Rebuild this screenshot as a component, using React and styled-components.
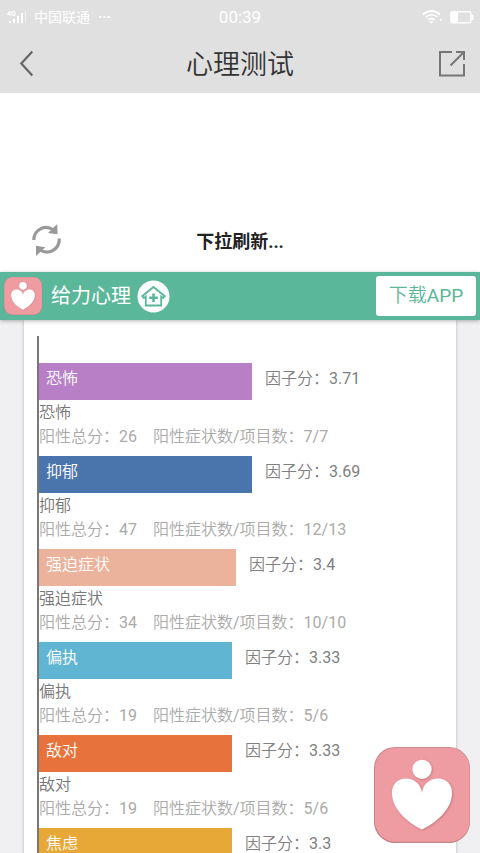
import styled, { createGlobalStyle } from "styled-components";

const GlobalStyle = createGlobalStyle`
  html {
    scrollbar-width: none;
  }
  body {
    margin: 0;
    background-color: #f0f0f2;
    font-family: Roboto, "Noto Sans CJK SC", sans-serif;
    color: #888888;
  }
  button {
    font-family: inherit;
    border: none;
    padding: 0;
    background: none;
    cursor: pointer;
  }
  svg {
    display: block;
  }
`

const lightFont = `Roboto, "Noto Sans CJK SC DemiLight", "Noto Sans CJK SC", sans-serif`

const TopArea = styled.header`
  background-color: #e0e0e0;
`

const StatusBar = styled.div`
  display: grid;
  grid-template-columns: 1fr auto 1fr;
  align-items: center;
  height: 34px;
  padding: 0 6px;
  color: #ffffff;
`

const StatusGroup = styled.div`
  display: flex;
  align-items: center;
  justify-content: ${props => props.$end ? "flex-end" : "flex-start"};
  gap: 8px;
  font-size: 14px;
  line-height: 20px;
`

const Dots = styled.span`
  font-weight: 700;
`

const Clock = styled.time`
  font-size: 17px;
`

const NavBar = styled.nav`
  display: grid;
  grid-template-columns: 1fr auto 1fr;
  align-items: center;
  height: 59px;
  padding: 0 14px;
`

const NavButton = styled.button`
  justify-self: ${props => props.$end ? "end" : "start"};
`

const PageTitle = styled.h1`
  margin: 0;
  padding-top: 3px;
  font-family: ${lightFont};
  font-size: 27px;
  font-weight: 400;
  line-height: 56px;
  color: #333333;
`

const Refresh = styled.div`
  display: grid;
  grid-template-columns: 1fr auto 1fr;
  align-items: center;
  box-sizing: border-box;
  height: 179px;
  padding: 115px 30px 0;
  background-color: #ffffff;
`

const RefreshText = styled.p`
  margin: 0;
  font-size: 18px;
  font-weight: 700;
  color: #222222;
`

const Banner = styled.section`
  position: relative;
  display: flex;
  align-items: center;
  height: 48px;
  padding: 0 4px;
  background-color: #5bb799;
  box-shadow: 0 1px 4px rgba(0, 0, 0, 0.3);
`

const Brand = styled.h2`
  margin: 0 6px 0 9px;
  font-size: 20px;
  font-weight: 400;
  line-height: 28px;
  color: #ffffff;
`

const Download = styled.button`
  margin-left: auto;
  width: 100px;
  height: 40px;
  border-radius: 3px;
  background-color: #ffffff;
  font-family: ${lightFont};
  font-size: 19px;
  line-height: 38px;
  color: #5bb799;
`

const Card = styled.main`
  margin: 0 24px;
  padding: 16px 15px 0 13px;
  background-color: #ffffff;
  box-shadow: 0 0 3px rgba(0, 0, 0, 0.25);
`

const Chart = styled.ul`
  margin: 0;
  padding: 27px 0 0;
  border-left: 2px solid #777777;
  list-style: none;
  font-family: ${lightFont};
  font-size: 16px;
`

const BarRow = styled.div`
  display: flex;
  gap: 13px;
  line-height: 32px;
`

const Bar = styled.div`
  box-sizing: border-box;
  height: 37px;
  padding-left: 7px;
  color: #ffffff;
  background-color: ${props => props.$color};
`

const Score = styled.span`
  color: #808080;
  white-space: nowrap;
`

const Name = styled.p`
  margin: 0;
  line-height: 26px;
  color: #777777;
`

const Detail = styled.p`
  display: flex;
  gap: 16px;
  margin: 0 0 8px;
  line-height: 22px;
  white-space: nowrap;
  color: #aaaaaa;
`

const FloatButton = styled.button`
  position: fixed;
  right: 10px;
  bottom: 10px;
`

const factors = [
  { name: "恐怖", score: "3.71", width: 53, color: "#b87fc6", total: 26, count: "7/7" },
  { name: "抑郁", score: "3.69", width: 53, color: "#4a75ac", total: 47, count: "12/13" },
  { name: "强迫症状", score: "3.4", width: 49, color: "#ebb39b", total: 34, count: "10/10" },
  { name: "偏执", score: "3.33", width: 48, color: "#60b5d2", total: 19, count: "5/6" },
  { name: "敌对", score: "3.33", width: 48, color: "#e8723c", total: 19, count: "5/6" },
  { name: "焦虑", score: "3.3", width: 48, color: "#e8a838" },
]

function HeartLogo({ size }) {
  return (
    <svg width={size} height={size} viewBox="0 0 96 96" aria-hidden="true">
      <defs>
        <filter id={`shade${size}`} x="-20%" y="-20%" width="140%" height="140%">
          <feDropShadow dx="0.8" dy="0.8" stdDeviation="1" floodColor="#8c4a50" floodOpacity="0.5" />
        </filter>
      </defs>
      <rect width="96" height="96" rx="21" fill="#c58489" />
      <rect x="1" y="0.7" width="94.6" height="94" rx="20.5" fill="#ee9ca2" />
      <g fill="#ffffff" filter={`url(#shade${size})`}>
        <circle cx="48" cy="22.3" r="9.6" />
        <path d="M48 46C47 37 40 31.5 32 31.5C23 31.5 18 38 18 46C18 62 33 75 48 82.5C63 75 78 62 78 46C78 38 73 31.5 64 31.5C56 31.5 49 37 48 46Z" />
      </g>
    </svg>
  )
}

function SignalIcon() {
  return (
    <svg width="20" height="16" viewBox="0 0 20 16" fill="#ffffff" aria-hidden="true">
      <text x="1" y="7" fontSize="7" fontWeight="700">4G</text>
      <path d="M3 12h2v2H3zM7 10h2v4H7zM11 7h2v7h-2zM15 4h2v10h-2z" />
      <path d="M19 2h1v12h-1z" opacity="0.5" />
    </svg>
  )
}

function WifiIcon() {
  return (
    <svg width="20" height="14" viewBox="0 0 20 14" fill="none" stroke="#ffffff" strokeWidth="1.8" aria-hidden="true">
      <path d="M1 4.5C6-.2 13-.2 18 4.5M3.7 7.2C7.2 4 11.8 4 15.3 7.2M6.3 9.8C8.3 8.2 10.7 8.2 12.7 9.8" />
      <path d="M7.3 11.2h4.4L9.5 13.8z" fill="#ffffff" stroke="none" />
      <circle cx="18.8" cy="9.8" r="1" fill="#ffffff" stroke="none" />
    </svg>
  )
}

function BatteryIcon() {
  return (
    <svg width="24" height="13" viewBox="0 0 24 13" fill="#ffffff" aria-hidden="true">
      <rect x="0.8" y="0.8" width="20" height="11" rx="1.5" fill="none" stroke="#ffffff" strokeWidth="1.4" />
      <path d="M1 1h7v11H1zM21.5 4H23.5v5h-2z" />
    </svg>
  )
}

function RefreshIcon() {
  return (
    <svg width="34" height="34" viewBox="0 0 34 34" aria-hidden="true">
      <g fill="none" stroke="#999999" strokeWidth="3.2">
        <path d="M3.8 17C4 6 16 0.8 24 7.5" />
        <path d="M29.3 15.5C29.5 27 18 32.5 9.3 26.5" />
      </g>
      <path d="M27.2 1L27.6 11.2L18 10Z" fill="#999999" />
      <path d="M6 33L6 22.8L15.4 24.2Z" fill="#999999" />
    </svg>
  )
}

function HomeIcon() {
  return (
    <svg width="33" height="33" viewBox="0 0 33 33" aria-hidden="true">
      <circle cx="16.5" cy="16.5" r="16" fill="#ffffff" />
      <g fill="none" stroke="#5bb799" strokeWidth="1.8">
        <path d="M16.5 7L27.8 16.2L26.2 18L24.2 16.6V25.5H8.8V16.6L6.8 18L5.2 16.2Z" />
        <path d="M16.5 13.5V22M12.2 17.7H20.8" strokeWidth="2.6" />
      </g>
    </svg>
  )
}

export default function App() {
  return (
    <>
      <GlobalStyle />
      <TopArea>
        <StatusBar>
          <StatusGroup>
            <SignalIcon />
            <span>中国联通</span>
            <Dots>···</Dots>
          </StatusGroup>
          <Clock>00:39</Clock>
          <StatusGroup $end>
            <WifiIcon />
            <BatteryIcon />
          </StatusGroup>
        </StatusBar>
        <NavBar>
          <NavButton aria-label="返回">
            <svg width="22" height="28" viewBox="0 0 22 28" fill="none" stroke="#666666" strokeWidth="2.2">
              <path d="M18.3 1.5L7.3 13.5L18.3 25.5" />
            </svg>
          </NavButton>
          <PageTitle>心理测试</PageTitle>
          <NavButton $end aria-label="分享">
            <svg width="28" height="28" viewBox="0 0 28 28" fill="none" stroke="#777777" strokeWidth="2">
              <path d="M14 2H2V25.5H26V14M18 2H26V10M12.5 15.5L25.5 2.5" />
            </svg>
          </NavButton>
        </NavBar>
      </TopArea>
      <Refresh>
        <RefreshIcon />
        <RefreshText>下拉刷新...</RefreshText>
      </Refresh>
      <Banner>
        <HeartLogo size={38} />
        <Brand>给力心理</Brand>
        <HomeIcon />
        <Download>下载APP</Download>
      </Banner>
      <Card>
        <Chart>
          {factors.map((item) => (
            <li key={item.name}>
              <BarRow>
                <Bar $color={item.color} style={{ width: `${item.width}%` }}>{item.name}</Bar>
                <Score>因子分：{item.score}</Score>
              </BarRow>
              {item.total && (
                <>
                  <Name>{item.name}</Name>
                  <Detail>
                    <span>阳性总分：{item.total}</span>
                    <span>阳性症状数/项目数：{item.count}</span>
                  </Detail>
                </>
              )}
            </li>
          ))}
        </Chart>
      </Card>
      <FloatButton aria-label="给力心理">
        <HeartLogo size={96} />
      </FloatButton>
    </>
  )
}
